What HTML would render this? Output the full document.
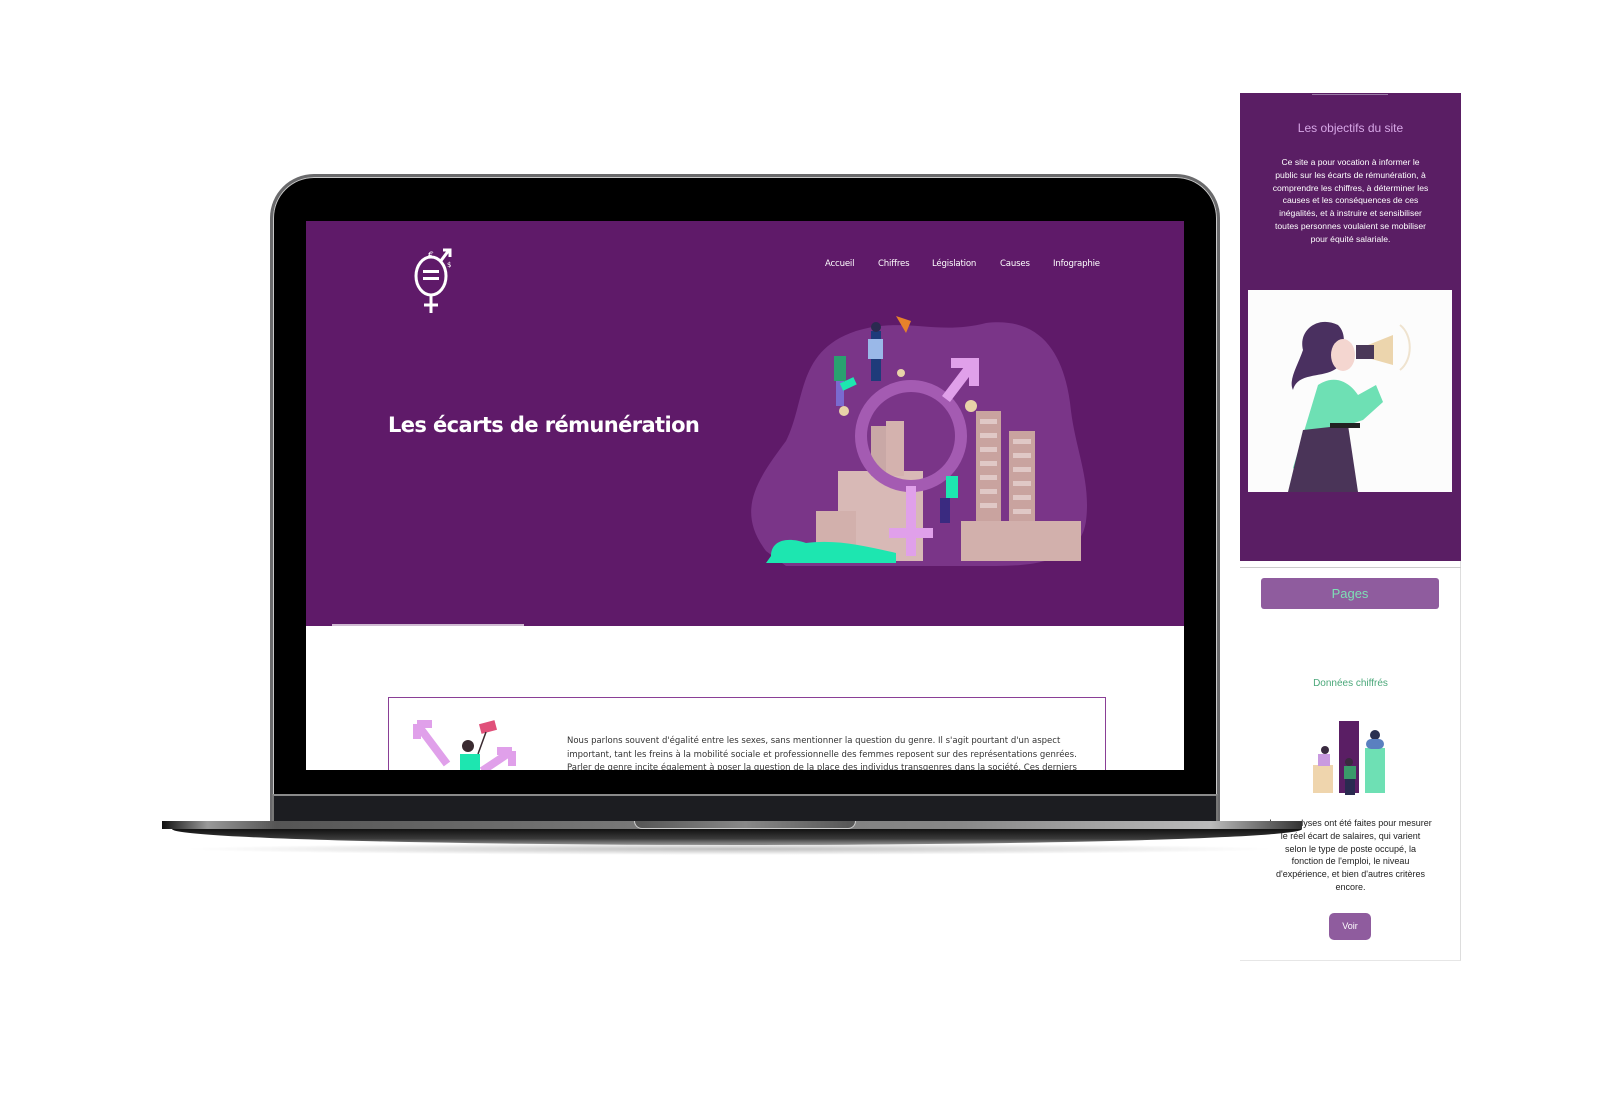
<!DOCTYPE html>
<html><head><meta charset="utf-8">
<style>
*{margin:0;padding:0;box-sizing:border-box}
body{width:1601px;height:1095px;background:#fff;position:relative;overflow:hidden;font-family:"Liberation Sans",sans-serif}
.abs{position:absolute}
.lid{left:270px;top:174px;width:950px;height:650px;border:3px solid #6a6a6c;border-radius:44px 44px 0 0;background:#000;border-bottom:none}
.lid2{left:273px;top:177px;width:944px;height:647px;border:1px solid #c8c8c8;border-radius:41px 41px 0 0;border-bottom:none}
.screen{left:306px;top:221px;width:878px;height:549px;background:#fff;overflow:hidden}
.hero{left:0;top:0;width:878px;height:405px;background:#5f1a69}
.nav{top:38px;font-family:"DejaVu Sans",sans-serif;font-size:8.6px;color:#fff;letter-spacing:-0.2px}
.title{left:82px;top:192px;font-family:"DejaVu Sans",sans-serif;font-size:21px;font-weight:bold;color:#fff;letter-spacing:-0.6px}
.card{left:82px;top:476px;width:718px;height:100px;border:1.5px solid #8a3f96}
.ptxt{left:261px;top:514px;width:535px;font-family:"DejaVu Sans",sans-serif;font-size:8.5px;line-height:13.5px;color:#333;letter-spacing:0px}
.chin{left:272px;top:794px;width:946px;height:28px;background:#1c1d21;border-top:2px solid #8a8a8a;border-left:2px solid #777;border-right:2px solid #777}
.base{left:162px;top:821px;width:1140px;height:8px;background:linear-gradient(90deg,#111 0%,#999 4%,#555 10%,#777 40%,#888 70%,#bbb 92%,#333 100%);z-index:5}
.base2{left:172px;top:829px;width:1130px;height:16px;background:linear-gradient(#111,#3a3a3a 60%,#999);border-radius:0 0 50% 50%/0 0 100% 100%;z-index:5}
.notch{left:634px;top:821px;width:222px;height:8px;background:linear-gradient(90deg,#555,#888 50%,#555);border-radius:0 0 8px 8px;border:1px solid #ccc;border-top:none;z-index:6}
.shadow{left:180px;top:843px;width:1100px;height:12px;background:radial-gradient(ellipse at center,rgba(0,0,0,.25),rgba(0,0,0,0) 70%);z-index:5}
.side{left:1240px;top:93px;width:221px;height:868px;background:#fff;border-right:1px solid #ddd;border-bottom:1px solid #e6e6e6}
.sidetop{left:0;top:0;width:221px;height:468px;background:#5a1e64}
</style></head><body>

<div class="abs side">
 <div class="abs sidetop">
  <div class="abs" style="left:72px;top:1px;width:76px;height:1px;background:#9a7aa6"></div>
  <div class="abs" style="left:0;top:28px;width:221px;text-align:center;color:#d7a7e6;font-size:12px">Les objectifs du site</div>
  <div class="abs" style="left:31px;top:63px;width:159px;text-align:center;color:#fff;font-size:8.6px;line-height:12.8px">Ce site a pour vocation à informer le public sur les écarts de rémunération, à comprendre les chiffres, à déterminer les causes et les conséquences de ces inégalités, et à instruire et sensibiliser toutes personnes voulaient se mobiliser pour équité salariale.</div>
  <div class="abs" style="left:8px;top:197px;width:204px;height:202px;background:#fcfcfc;overflow:hidden">
   <svg width="204" height="202" viewBox="0 0 204 202">
    <path d="M120 55L145 45V75L120 68Z" fill="#ecd5ad"/><rect x="108" y="55" width="18" height="14" fill="#4a3858"/>
    <path d="M152 35C165 45 165 70 152 80" stroke="#efe3cf" stroke-width="2" fill="none"/>
    <path d="M55 60C50 40 70 25 90 35C100 45 95 60 92 75C80 90 50 80 45 100C40 90 50 75 55 60Z" fill="#4a3060"/>
    <ellipse cx="95" cy="65" rx="12" ry="16" fill="#f4d6d0"/>
    <path d="M70 95C85 85 100 90 110 105L128 95L135 112L115 130L100 135L60 190L45 178Z" fill="#6ee0b4"/>
    <path d="M55 140L100 135L110 202H40Z" fill="#4a3458"/><rect x="82" y="133" width="30" height="5" fill="#222"/>
   </svg>
  </div>
 </div>
 <div class="abs" style="left:0;top:474px;width:221px;height:1px;background:#ccc"></div>
 <div class="abs" style="left:21px;top:485px;width:178px;height:31px;background:#8f5c9e;border-radius:3px;color:#7ee0b5;font-size:13px;text-align:center;line-height:31px">Pages</div>
 <div class="abs" style="left:0;top:585px;width:221px;text-align:center;color:#4ba87a;font-size:10px">Données chiffrés</div>
 <svg class="abs" style="left:70px;top:625px" width="80" height="85" viewBox="0 0 80 85">
  <rect x="3" y="47" width="20" height="28" fill="#efd5ad"/><rect x="29" y="3" width="20" height="72" fill="#5a1e64"/><rect x="55" y="30" width="20" height="45" fill="#6ee0b4"/>
  <circle cx="15" cy="32" r="4" fill="#3a2a40"/><rect x="8" y="36" width="12" height="12" fill="#c99ae0"/>
  <circle cx="65" cy="17" r="5" fill="#2a3050"/><rect x="56" y="21" width="18" height="10" rx="5" fill="#5a80c0"/>
  <circle cx="39" cy="44" r="4" fill="#3a2a40"/><rect x="34" y="48" width="12" height="13" fill="#3a9a6a"/><rect x="35" y="61" width="10" height="16" fill="#2a2a50"/>
 </svg>
 <div class="abs" style="left:29px;top:724px;width:163px;text-align:center;color:#222;font-size:9px;line-height:12.8px">Les analyses ont été faites pour mesurer le réel écart de salaires, qui varient selon le type de poste occupé, la fonction de l'emploi, le niveau d'expérience, et bien d'autres critères encore.</div>
 <div class="abs" style="left:89px;top:820px;width:42px;height:27px;background:#8f5c9e;border-radius:5px;color:#fff;font-size:9px;text-align:center;line-height:27px">Voir</div>
</div>

<div class="abs lid"></div>
<div class="abs lid2"></div>
<div class="abs screen">
 <div class="abs hero">
  <svg class="abs" style="left:100px;top:24px" width="52" height="72" viewBox="0 0 52 72">
   <ellipse cx="25" cy="31" rx="15" ry="19" fill="none" stroke="#fff" stroke-width="3"/>
   <rect x="17" y="25" width="16" height="3" fill="#fff"/><rect x="17" y="32" width="16" height="3" fill="#fff"/>
   <path d="M25 50V68M18 60H32" stroke="#fff" stroke-width="3" fill="none"/>
   <path d="M34 17L43 5M37 5H44V12" stroke="#fff" stroke-width="3" fill="none"/>
   <text x="22" y="13" fill="#fff" font-size="9" font-family="DejaVu Sans">€</text>
   <text x="41" y="22" fill="#fff" font-size="7" font-family="DejaVu Sans">$</text>
  </svg>
  <div class="abs nav" style="left:519px">Accueil</div>
  <div class="abs nav" style="left:572px">Chiffres</div>
  <div class="abs nav" style="left:626px">Législation</div>
  <div class="abs nav" style="left:694px">Causes</div>
  <div class="abs nav" style="left:747px">Infographie</div>
  <div class="abs title">Les écarts de rémunération</div>
  <svg class="abs" style="left:440px;top:90px" width="350" height="260" viewBox="0 0 350 260">
   <path d="M20 240C-10 200 10 170 40 130C60 90 50 40 110 20C160 5 190 25 240 12C300 5 320 50 325 100C330 140 345 170 340 210C335 245 300 255 250 255L40 255Z" fill="#7a3588"/>
   <rect x="92" y="160" width="85" height="90" fill="#d8b9b6"/>
   <rect x="125" y="115" width="30" height="50" fill="#c9a8a6"/><rect x="140" y="110" width="18" height="55" fill="#d4b2ae"/>
   <rect x="70" y="200" width="40" height="50" fill="#d2b0ac"/>
   <rect x="230" y="100" width="25" height="150" fill="#c9a39f"/>
   <rect x="263" y="120" width="26" height="130" fill="#c9a39f"/>
   <g fill="#e0c8c6"><rect x="234" y="108" width="17" height="5"/><rect x="234" y="122" width="17" height="5"/><rect x="234" y="136" width="17" height="5"/><rect x="234" y="150" width="17" height="5"/><rect x="234" y="164" width="17" height="5"/><rect x="234" y="178" width="17" height="5"/><rect x="234" y="192" width="17" height="5"/><rect x="267" y="128" width="18" height="5"/><rect x="267" y="142" width="18" height="5"/><rect x="267" y="156" width="18" height="5"/><rect x="267" y="170" width="18" height="5"/><rect x="267" y="184" width="18" height="5"/><rect x="267" y="198" width="18" height="5"/></g>
   <rect x="215" y="210" width="120" height="40" fill="#d2b0ac"/>
   <circle cx="165" cy="125" r="50" fill="none" stroke="#a45bb2" stroke-width="12"/>
   <path d="M200 88L225 55M205 52H228V75" stroke="#e0a0ea" stroke-width="10" fill="none"/>
   <path d="M165 175V245M143 222H187" stroke="#e0a0ea" stroke-width="10" fill="none"/>
   <path d="M25 245C25 230 40 225 60 232C90 228 120 235 150 242L150 252L20 252Z" fill="#1de6b0"/>
   <rect x="125" y="20" width="10" height="50" fill="#1e3b7a"/><circle cx="130" cy="16" r="5" fill="#2a2a50"/><rect x="122" y="28" width="15" height="20" fill="#9ab8e8"/>
   <rect x="88" y="45" width="12" height="25" fill="#2aa070"/><rect x="90" y="70" width="8" height="25" fill="#7a6ad0"/>
   <rect x="200" y="165" width="12" height="22" fill="#1de6b0"/><rect x="194" y="187" width="10" height="25" fill="#3a2a80"/>
   <circle cx="98" cy="100" r="5" fill="#e8d3a8"/><circle cx="225" cy="95" r="6" fill="#e8d3a8"/><circle cx="155" cy="62" r="4" fill="#e8d3a8"/>
   <path d="M150 5L165 10L160 22Z" fill="#e6822a"/><rect x="95" y="70" width="15" height="8" fill="#1de6b0" transform="rotate(-25 100 74)"/>
  </svg>
 </div>
 <div class="abs" style="left:26px;top:403px;width:192px;height:2px;background:#fff;opacity:.7"></div>
 <div class="abs card"></div>
 <svg class="abs" style="left:106px;top:498px" width="110" height="52" viewBox="0 0 110 52">
  <path d="M5 5L35 45M5 5H20M5 5V20" stroke="#e0a0ea" stroke-width="8" fill="none"/>
  <path d="M100 32L70 52M100 32H85M100 32V47" stroke="#e0a0ea" stroke-width="8" fill="none"/>
  <rect x="48" y="35" width="20" height="17" fill="#1de6b0"/><circle cx="56" cy="27" r="6" fill="#3a2a30"/>
  <rect x="68" y="3" width="16" height="10" fill="#e0507a" transform="rotate(-15 76 8)"/><path d="M74 13L66 35" stroke="#3a2a30" stroke-width="1.5"/>
 </svg>
 <div class="abs ptxt">Nous parlons souvent d'égalité entre les sexes, sans mentionner la question du genre. Il s'agit pourtant d'un aspect important, tant les freins à la mobilité sociale et professionnelle des femmes reposent sur des représentations genrées. Parler de genre incite également à poser la question de la place des individus transgenres dans la société. Ces derniers</div>
</div>
<div class="abs chin"></div>
<div class="abs base2"></div>
<div class="abs base"></div>
<div class="abs notch"></div>
<div class="abs shadow"></div>
</body></html>
